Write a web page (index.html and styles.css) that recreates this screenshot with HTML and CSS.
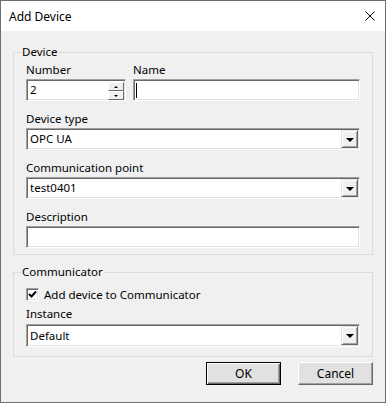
FILE: index.html
```html
<!DOCTYPE html>
<html lang="en">

<head>
    <meta charset="UTF-8">
    <title>Add Device</title>
    <link rel="stylesheet" href="styles.css">
</head>

<body>
    <div class="window">
        <div class="titlebar">
            <span class="title">Add Device</span>
            <svg class="close" width="10" height="10" viewBox="0 0 10 10">
                <path d="M0.5 0.5 L9.5 9.5 M9.5 0.5 L0.5 9.5" stroke="#000" stroke-width="1" fill="none"/>
            </svg>
        </div>

        <div class="content">
            <fieldset class="group group-device">
                <legend>Device</legend>

                <div class="row-two">
                    <div class="field">
                        <label>Number</label>
                        <div class="input spin-input">
                            <span class="value">2</span>
                            <div class="spin">
                                <div class="spin-btn"><span class="tri-up"></span></div>
                                <div class="spin-btn"><span class="tri-down"></span></div>
                            </div>
                        </div>
                    </div>
                    <div class="field">
                        <label>Name</label>
                        <div class="input"><span class="caret"></span></div>
                    </div>
                </div>

                <div class="field">
                    <label>Device type</label>
                    <div class="input combo">
                        <span class="value">OPC UA</span>
                        <div class="drop-btn"><span class="tri-down big"></span></div>
                    </div>
                </div>

                <div class="field">
                    <label>Communication point</label>
                    <div class="input combo">
                        <span class="value">test0401</span>
                        <div class="drop-btn"><span class="tri-down big"></span></div>
                    </div>
                </div>

                <div class="field last">
                    <label>Description</label>
                    <div class="input"></div>
                </div>
            </fieldset>

            <fieldset class="group group-comm">
                <legend>Communicator</legend>

                <div class="check-row">
                    <span class="checkbox">
                        <svg width="9" height="9" viewBox="0 0 9 9">
                            <path d="M1 4 L3.5 6.5 L8 1.5" stroke="#000" stroke-width="2" fill="none"/>
                        </svg>
                    </span>
                    <span>Add device to Communicator</span>
                </div>

                <div class="field last instance">
                    <label>Instance</label>
                    <div class="input combo">
                        <span class="value">Default</span>
                        <div class="drop-btn"><span class="tri-down big"></span></div>
                    </div>
                </div>
            </fieldset>

            <div class="buttons">
                <button class="btn btn-default">OK</button>
                <button class="btn">Cancel</button>
            </div>
        </div>
    </div>
</body>

</html>
```

FILE: styles.css
```css
* {
    padding: 0;
    margin: 0;
    box-sizing: border-box;
}

body {
    width: 386px;
    height: 403px;
    font-family: 'Noto Sans', 'Segoe UI', sans-serif;
    font-size: 11.5px;
    color: #000;
    background: #f0f0f0;
}

.window {
    width: 386px;
    height: 403px;
    border: 1px solid #6f6f6f;
    background: #f0f0f0;
    display: flex;
    flex-direction: column;
}

.titlebar {
    height: 30px;
    background: #fff;
    display: flex;
    justify-content: space-between;
    align-items: center;
    padding: 0 9px 0 8px;
    flex-shrink: 0;
}

.title {
    font-size: 12px;
}

.close {
    margin-right: 1px;
}

.content {
    padding: 13px 12px 0 12px;
}

.group {
    border: 1px solid #dcdcdc;
    padding: 0 12px 0 12px;
}

.group legend {
    margin-left: -5px;
    padding: 0 1px;
    line-height: 16px;
}

.group-device {
    padding-top: 2px;
    padding-bottom: 6px;
}

.group-comm {
    margin-top: 9px;
    padding-top: 6px;
    padding-bottom: 9px;
}

.field label {
    display: block;
    line-height: 16px;
    margin-bottom: 1px;
}

.field {
    margin-bottom: 10px;
}

.field.last {
    margin-bottom: 0;
}

.instance label {
    margin-bottom: 2px;
}

.instance .input {
    height: 23px;
}

.row-two {
    display: grid;
    grid-template-columns: 100px 1fr;
    gap: 7px;
}

.input {
    position: relative;
    height: 22px;
    background: #fff;
    border: 1px solid;
    border-color: #a0a0a0 #fff #fff #a0a0a0;
    box-shadow: inset 1px 1px 0 #696969, inset -1px -1px 0 #e3e3e3;
    display: flex;
    align-items: center;
    padding-left: 3px;
}

.value {
    line-height: 16px;
}

.caret {
    width: 1px;
    height: 15px;
    background: #000;
    margin-left: -1px;
}

.spin {
    position: absolute;
    right: 1px;
    top: 2px;
    width: 16px;
    height: 18px;
    display: flex;
    flex-direction: column;
}

.spin-btn {
    flex: 1;
    background: #f0f0f0;
    border: 1px solid;
    border-color: #fff #696969 #696969 #fff;
    display: flex;
    align-items: center;
    justify-content: center;
}

.tri-up {
    width: 0;
    height: 0;
    border-left: 2px solid transparent;
    border-right: 2px solid transparent;
    border-bottom: 2px solid #000;
}

.tri-down {
    width: 0;
    height: 0;
    border-left: 2px solid transparent;
    border-right: 2px solid transparent;
    border-top: 2px solid #000;
}

.tri-down.big {
    border-left-width: 4px;
    border-right-width: 4px;
    border-top-width: 4px;
}

.drop-btn {
    position: absolute;
    right: 1px;
    top: 1px;
    bottom: 1px;
    width: 17px;
    background: #f0f0f0;
    border: 1px solid;
    border-color: #e3e3e3 #696969 #696969 #e3e3e3;
    box-shadow: inset 1px 1px 0 #fff, inset -1px -1px 0 #a0a0a0;
    display: flex;
    align-items: center;
    justify-content: center;
    padding-top: 1px;
}

.check-row {
    display: flex;
    align-items: center;
    gap: 5px;
    height: 16px;
    margin-bottom: 4px;
}

.checkbox {
    width: 13px;
    height: 13px;
    background: #fff;
    border: 1px solid;
    border-color: #a0a0a0 #fff #fff #a0a0a0;
    box-shadow: inset 1px 1px 0 #696969, inset -1px -1px 0 #e3e3e3;
    display: flex;
    align-items: center;
    justify-content: center;
}

.buttons {
    display: flex;
    justify-content: flex-end;
    gap: 17px;
    margin-top: 5px;
}

.btn {
    width: 75px;
    height: 23px;
    font-family: inherit;
    font-size: 12px;
    background: #e1e1e1;
    border: 1px solid;
    border-color: #fff #696969 #696969 #fff;
    box-shadow: inset -1px -1px 0 #a0a0a0, inset 1px 1px 0 #e3e3e3;
    color: #000;
}

.btn-default {
    border: 1px solid #000;
    box-shadow: inset 1px 1px 0 #fff, inset -1px -1px 0 #696969, inset -2px -2px 0 #a0a0a0;
}
```
